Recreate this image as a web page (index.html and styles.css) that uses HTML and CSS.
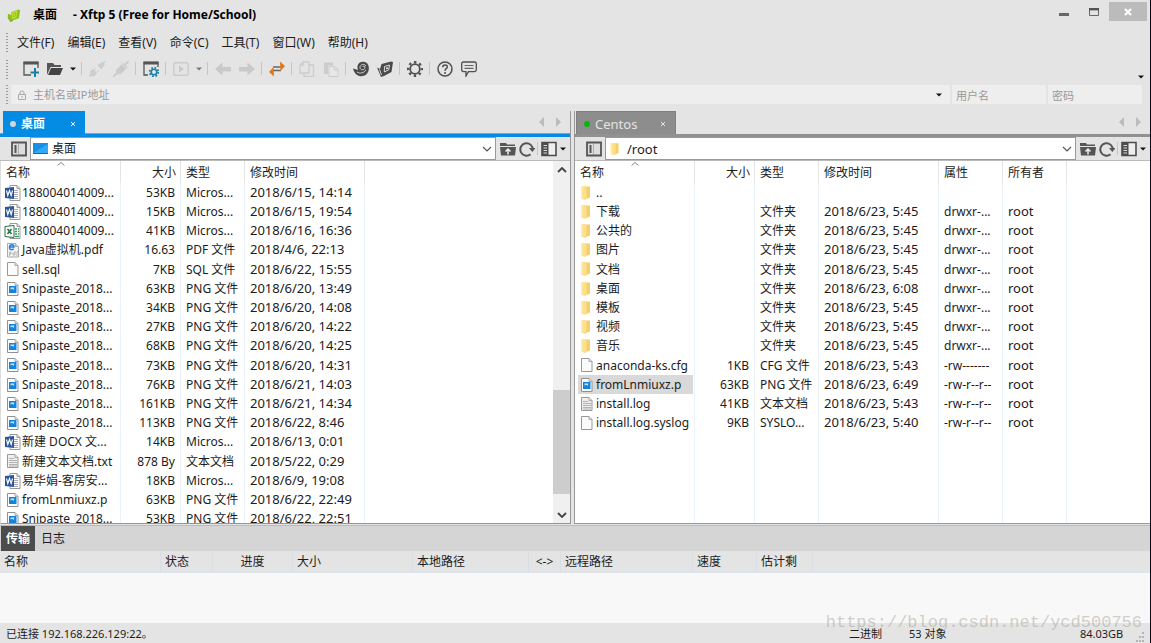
FILE: index.html
```html
<!DOCTYPE html>
<html lang="zh-CN">
<head>
<meta charset="utf-8">
<title>桌面 - Xftp 5</title>
<link rel="stylesheet" href="styles.css">
</head>
<body>
<svg class="defs" aria-hidden="true">
  <symbol id="word" viewBox="0 0 17 16"><path d="M6 .5h7l3 3v12H6z" fill="#fff" stroke="#999"/><path d="M13 .5v3h3" fill="#ddd" stroke="#999"/><path d="M9 5.500h5M9 7.500h5M9 9.500h5M9 11.500h5M9 13.500h5" stroke="#aab"/><path d="M1 3l9-1v12l-9-1z" fill="#2b579a"/><path d="M2.500 5.500l1.300 5 1.700-5 1.700 5 1.300-5" fill="none" stroke="#fff" stroke-width="1.100"/></symbol>
  <symbol id="excel" viewBox="0 0 17 16"><path d="M6 .5h7l3 3v12H6z" fill="#fff" stroke="#999"/><path d="M13 .5v3h3" fill="#ddd" stroke="#999"/><path d="M11 6h2M14 6h1M11 8.500h2M14 8.500h1M11 11h2M14 11h1M11 13.500h4" stroke="#3c9a62" stroke-width="1.500"/><path d="M1 3.500l9-1v12l-9-1z" fill="#fff" stroke="#217346"/><path d="M3.500 6l4 5M7.500 6l-4 5" stroke="#217346" stroke-width="1.600"/></symbol>
  <symbol id="pdf" viewBox="0 0 17 16"><path d="M3.500 1.500h8l3 3v10.500h-11z" fill="#f4f4f4" stroke="#aaa"/><path d="M11.500 1.500v3h3" fill="#ddd" stroke="#aaa"/><path d="M5.500 5h4.500c0-3-4-3-4.500 0s2 3 4.200 2" fill="none" stroke="#1d7fd4" stroke-width="1.400"/><path d="M5.500 14v-4h1.500v2h-1.500M11 9v4h-2v-2h2M13 14v-4.500h1" fill="none" stroke="#aaa" stroke-width=".8"/></symbol>
  <symbol id="file" viewBox="0 0 17 16"><path d="M3.500 1.500h7.500l3 3v10h-10.500z" fill="#fbfbfb" stroke="#989898"/><path d="M11 1.500v3h3" fill="#ddd" stroke="#aaa"/></symbol>
  <symbol id="text" viewBox="0 0 17 16"><path d="M3.500 1.500h7.500l3 3v10h-10.500z" fill="#eee" stroke="#989898"/><path d="M11 1.500v3h3" fill="#ddd" stroke="#aaa"/><path d="M5 5.500h5M5 7.500h8M5 9.500h8M5 11.500h8M5 13h8" stroke="#b4b4b4"/></symbol>
  <symbol id="png" viewBox="0 0 17 16"><path d="M3.500 1.500h7.500l3 3v10h-10.500z" fill="#fff" stroke="#909090"/><path d="M11 1.500v3h3" fill="#ddd" stroke="#aaa"/><path d="M5 5h7.500v7H5z" fill="#1483d8"/><path d="M6.500 6.500h4l-1 2.500-1.500-1.200-1.500.8z" fill="#bfe3ff"/></symbol>
  <symbol id="folder" viewBox="0 0 17 16"><path d="M7 1.500h5v11l-5 2z" fill="#f5cf6b"/><path d="M3 1h4.500l1 2v10.500l-1 1.500L3 14z" fill="#ffe08a"/><path d="M3 1h1.500v13L3 14z" fill="#fbedba"/></symbol>
  <symbol id="panel" viewBox="0 0 16 16"><path d="M1 1.500h14v13H1z" fill="#ddd" stroke="#555" stroke-width="1.800"/><path d="M4.500 4v8" stroke="#555" stroke-width="2"/><path d="M7.500 3v10" stroke="#999" stroke-width=".7"/></symbol>
  <symbol id="up" viewBox="0 0 16 16"><path d="M0 3.500V2h6l1 1.500h8V5H0zM0 6h16l-1 8.500H1z" fill="#555"/><path d="M8 13.500V8.500M5.500 10.500L8 8l2.500 2.500" fill="none" stroke="#eee" stroke-width="1.500"/></symbol>
  <symbol id="refresh" viewBox="0 0 16 16"><path d="M11.500 13.200A6.200 6.200 0 1 1 13.700 9" fill="none" stroke="#555" stroke-width="2"/><path d="M10 7h6.500l-3.200 4z" fill="#555"/></symbol>
  <symbol id="view" viewBox="0 0 16 16"><path d="M1 1.500h14v13H1z" fill="#eee" stroke="#4c4c4c" stroke-width="1.600"/><path d="M1 1.500h6.500v13H1z" fill="#4c4c4c"/><path d="M2.500 4.500h3.500M2.500 7h3.500M2.500 9.500h3.500M2.500 12h3.500" stroke="#ddd"/></symbol>
  <symbol id="drop" viewBox="0 0 6 4"><path d="M0 .5h6L3 3.500z" fill="#111"/></symbol>
  <symbol id="chev" viewBox="0 0 10 6"><path d="M1 1l4 4 4-4" fill="none" stroke="#555" stroke-width="1.200"/></symbol>
  <symbol id="caret" viewBox="0 0 8 4"><path d="M.5 3.500L4 .5l3.500 3" fill="none" stroke="#888"/></symbol>
  <symbol id="x" viewBox="0 0 8 8"><path d="M2 2l4 4M6 2l-4 4" stroke="currentColor"/></symbol>
  <symbol id="pager" viewBox="0 0 24 10"><path d="M6 0v10L1 5zM18 0v10l5-5z" fill="#bcbcbc"/></symbol>
</svg>

<header class="titlebar">
  <svg class="logo" viewBox="0 0 16 16"><path d="M1 6l4 1.500V4l8-3 2 1-1.500 9-6.500 2.500L4 15 1 10z" fill="#8cc21a"/><path d="M5 4.500l7-2.700-1 8.500-5 2z" fill="#b9df2c"/><path d="M7.500 6l2.500-1-.5 3.500-2 .8z" fill="#d3ec50" stroke="#86b31a" stroke-width=".8"/><path d="M1 10l3 5 3-1.500" fill="none" stroke="#6d9a20" stroke-width=".8"/></svg>
  <h1 class="title"><span>桌面</span><span>- Xftp 5 (Free for Home/School)</span></h1>
  <div class="winbtns">
    <button class="winbtn" aria-label="最小化"><svg width="10" height="10" viewBox="0 0 10 10"><path d="M0 7.500h10" stroke="#666" stroke-width="3"/></svg></button>
    <button class="winbtn" aria-label="最大化"><svg width="10" height="8" viewBox="0 0 10 8"><path d="M.5.500h9v7h-9z" fill="none" stroke="#666"/><path d="M0 1.200h10" stroke="#555" stroke-width="2.400"/></svg></button>
    <button class="winbtn close" aria-label="关闭"><svg width="8" height="8" viewBox="0 0 8 8"><path d="M1 1l6 6M7 1L1 7" stroke="#fff" stroke-width="2.200"/></svg></button>
  </div>
</header>

<nav class="menubar"><i class="grip"></i>
  <button>文件(F)</button><button>编辑(E)</button><button>查看(V)</button><button>命令(C)</button><button>工具(T)</button><button>窗口(W)</button><button>帮助(H)</button>
</nav>

<div class="toolbar"><i class="grip"></i>
  <div class="tools">
  <button class="tool" aria-label="新建"><svg viewBox="0 0 16 16"><path d="M8 14H1V1.500h14V7" fill="none" stroke="#555" stroke-width="1.300"/><path d="M.5 2h15" stroke="#555" stroke-width="3"/><path d="M12 7v9M7.500 11.500h9" stroke="#1c7ea8" stroke-width="2"/></svg></button>
  <button class="tool" aria-label="打开"><svg viewBox="0 0 16 16"><path d="M0 14V2h6l1.500 2H14v2H3.500z" fill="#555"/><path d="M4 7h12l-3 7H1z" fill="#444"/></svg></button>
  <button class="more" aria-label="更多"><svg width="6" height="4"><use href="#drop"/></svg></button>
  <i class="sep"></i>
  <button class="tool" aria-label="连接" disabled><svg viewBox="0 0 16 16"><path d="M0 15.500l3-3M13 3.500l3-3" stroke="#ccc" stroke-width="1.500"/><path d="M1.500 10.500l2.500-2 3.500 3.500-2 2.500-3 .5zM5.500 8.500l1.500-1.500M8 11l1.500-1.500M9 4.500l4-3 2.200 2.200-3 4z" fill="#ccc" stroke="#ccc"/></svg></button>
  <button class="tool" aria-label="断开" disabled><svg viewBox="0 0 16 16"><path d="M0 16l4-4M12 4l3.500-3.500" stroke="#ccc" stroke-width="1.800"/><path d="M3 9l6-6 4.500 4.500-6 5.500-4 .5z" fill="#ccc"/><path d="M7 6l4 4M9 1.500l5.500 5.500" stroke="#c4c4c4"/></svg></button>
  <i class="sep"></i>
  <button class="tool" aria-label="属性"><svg viewBox="0 0 16 16"><path d="M5 14H1V1.500h14V6" fill="none" stroke="#555" stroke-width="1.300"/><path d="M.5 2h15" stroke="#555" stroke-width="3"/><circle cx="11" cy="11" r="2.800" fill="none" stroke="#1c7ea8" stroke-width="1.600"/><circle cx="11" cy="11" r="4.300" fill="none" stroke="#1c7ea8" stroke-width="1.800" stroke-dasharray="1.700 1.680"/></svg></button>
  <i class="sep"></i>
  <button class="tool" aria-label="运行" disabled><svg viewBox="0 0 16 16"><rect x=".8" y="1.800" width="14.400" height="12.400" rx="1.500" fill="none" stroke="#ccc" stroke-width="1.500"/><path d="M6 4.500v7L11 8z" fill="#c8c8c8"/></svg></button>
  <button class="more dim" aria-label="更多" disabled><svg width="6" height="4"><use href="#drop"/></svg></button>
  <i class="sep"></i>
  <button class="tool" aria-label="后退" disabled><svg viewBox="0 0 16 16"><path d="M0 8l7.500-6.500V6H16v4.500H7.500v4z" fill="#c9c9c9"/></svg></button>
  <button class="tool" aria-label="前进" disabled><svg viewBox="0 0 16 16"><path d="M16 8L8.500 1.500V6H0v4.500h8.500v4z" fill="#c9c9c9"/></svg></button>
  <i class="sep"></i>
  <button class="tool" aria-label="传输"><svg viewBox="0 0 16 16"><path d="M4 6h8M4 9.500h8" stroke="#666" stroke-width="1.500"/><path d="M11 .5l5 4.500-4.500 5zM5 15.500L0 11l4.500-5z" fill="#e07818"/></svg></button>
  <i class="sep"></i>
  <button class="tool" aria-label="复制" disabled><svg viewBox="0 0 16 16"><path d="M5 12H1V4l3-3h6v11H5M1 4h3V1M10 4h4.500v11.500H5V12" fill="none" stroke="#ccc" stroke-width="1.300"/></svg></button>
  <button class="tool" aria-label="粘贴" disabled><svg viewBox="0 0 16 16"><path d="M1 1.500h9v3H5V13H1z" fill="#ccc"/><path d="M6 5.500h5.500l3.500 3v7H6zM11 5.500v3.500h4" fill="#e8e8e8" stroke="#ccc"/></svg></button>
  <i class="sep"></i>
  <button class="tool" aria-label="Xshell"><svg viewBox="0 0 16 16"><path d="M0 7.500l5 1.500C3 3 7 0 11 .8c4 .7 5 4 4.800 7.200-.3 5-4.300 7.500-8.300 7.200C4 15 1 12 0 7.500z" fill="#4a4a4a"/><path d="M13 5c-2-3-6-1.500-6 1.500 0 3 5 3 5 0 0-1.500-2-2-2.500-.5M4 11c3 2 7 1 9-2" fill="none" stroke="#ddd" stroke-width=".9"/></svg></button>
  <button class="tool" aria-label="Xftp"><svg viewBox="0 0 16 16"><path d="M0 6.500l3 1.500 1.500-5L14 .5l2 .5-1.500 10L7 15l-3 1z" fill="#4a4a4a"/><path d="M7.500 5.500L12.500 4l-.8 4.800L7.300 11zM2.500 8.500L4.500 14" fill="none" stroke="#ddd"/><circle cx="10" cy="7.300" r="1" fill="#eee"/></svg></button>
  <i class="sep"></i>
  <button class="tool" aria-label="选项"><svg viewBox="0 0 16 16"><circle cx="8" cy="8" r="4.800" fill="none" stroke="#505050" stroke-width="1.800"/><circle cx="8" cy="8" r="6.800" fill="none" stroke="#505050" stroke-width="2.400" stroke-dasharray="2.400 2.940" stroke-dashoffset="1.200"/></svg></button>
  <i class="sep"></i>
  <button class="tool" aria-label="帮助"><svg viewBox="0 0 16 16"><circle cx="8" cy="8" r="7" fill="none" stroke="#505050" stroke-width="1.500"/><path d="M5.700 6.300C5.700 3 10.500 3.300 10.300 6 10.200 7.600 8 7.700 8 9.800" fill="none" stroke="#505050" stroke-width="1.500"/><circle cx="8" cy="12" r="1" fill="#505050"/></svg></button>
  <button class="tool" aria-label="反馈"><svg viewBox="0 0 16 16"><path d="M2.500 1h11q1.800 0 1.800 1.800v6q0 1.800-1.800 1.800H7.500L5 15v-4.400H2.500Q.7 10.600.7 8.800v-6Q.7 1 2.500 1z" fill="none" stroke="#505050" stroke-width="1.300"/><path d="M3.500 4.500h9M3.500 7.300h9" stroke="#666" stroke-width="1.200"/></svg></button>
  </div>
  <button class="more overflow" aria-label="工具栏选项"><svg width="6" height="4"><use href="#drop"/></svg></button>
</div>

<form class="connect"><i class="grip"></i>
  <div class="host">
    <svg width="8" height="10" viewBox="0 0 8 10"><path d="M.5 4.500h7v5h-7zM2 4.500V2q2-2.500 4 0v2.500M4 6v2" fill="none" stroke="#aaa"/></svg>
    <input aria-label="主机名或IP地址" placeholder="主机名或IP地址">
    <button type="button" class="more" aria-label="历史记录"><svg width="6" height="4"><use href="#drop"/></svg></button>
  </div>
  <input class="cred" aria-label="用户名" placeholder="用户名">
  <input class="cred" aria-label="密码" type="password" placeholder="密码">
</form>

<main class="panes">
<section class="pane local">
  <div class="tabs">
    <button class="tab"><i class="dot"></i><span>桌面</span><svg width="8" height="8"><use href="#x"/></svg></button>
    <svg class="pager" width="24" height="10"><use href="#pager"/></svg>
  </div>
  <div class="pathbar">
    <button class="pbtn" aria-label="面板"><svg width="16" height="16"><use href="#panel"/></svg></button>
    <div class="combo">
      <svg class="place" width="15" height="13" viewBox="0 0 15 13"><path d="M0 1h15v10H0z" fill="#1690e6"/><path d="M0 11L15 2v9z" fill="#32a8f5"/><path d="M0 11.500h15" stroke="#0b6fb8"/></svg>
      <select aria-label="本地路径"><option>桌面</option></select>
      <svg class="arrow" width="10" height="6"><use href="#chev"/></svg>
    </div>
    <button class="pbtn" aria-label="上一级"><svg width="16" height="16"><use href="#up"/></svg></button>
    <button class="pbtn" aria-label="刷新"><svg width="16" height="16"><use href="#refresh"/></svg></button>
    <i class="sep"></i>
    <button class="pbtn wide" aria-label="视图"><svg width="16" height="16"><use href="#view"/></svg><svg width="6" height="4"><use href="#drop"/></svg></button>
  </div>
  <div class="listing">
    <div class="scroller">
    <table class="files">
      <colgroup><col class="c-name"><col class="c-size"><col class="c-type"><col class="c-date"><col></colgroup>
      <thead><tr><th>名称<svg class="sort" width="8" height="4"><use href="#caret"/></svg></th><th class="num">大小</th><th>类型</th><th>修改时间</th><th class="rest"></th></tr></thead>
      <tbody>
      <tr><td><span class="name"><svg><use href="#word"/></svg>188004014009...</span></td><td class="num">53KB</td><td>Micros...</td><td class="date">2018/6/15, 14:14</td><td class="rest"></td></tr>
      <tr><td><span class="name"><svg><use href="#word"/></svg>188004014009...</span></td><td class="num">15KB</td><td>Micros...</td><td class="date">2018/6/15, 19:54</td><td class="rest"></td></tr>
      <tr><td><span class="name"><svg><use href="#excel"/></svg>188004014009...</span></td><td class="num">41KB</td><td>Micros...</td><td class="date">2018/6/16, 16:36</td><td class="rest"></td></tr>
      <tr><td><span class="name"><svg><use href="#pdf"/></svg>Java虚拟机.pdf</span></td><td class="num">16.63</td><td>PDF 文件</td><td class="date">2018/4/6, 22:13</td><td class="rest"></td></tr>
      <tr><td><span class="name"><svg><use href="#file"/></svg>sell.sql</span></td><td class="num">7KB</td><td>SQL 文件</td><td class="date">2018/6/22, 15:55</td><td class="rest"></td></tr>
      <tr><td><span class="name"><svg><use href="#png"/></svg>Snipaste_2018...</span></td><td class="num">63KB</td><td>PNG 文件</td><td class="date">2018/6/20, 13:49</td><td class="rest"></td></tr>
      <tr><td><span class="name"><svg><use href="#png"/></svg>Snipaste_2018...</span></td><td class="num">34KB</td><td>PNG 文件</td><td class="date">2018/6/20, 14:08</td><td class="rest"></td></tr>
      <tr><td><span class="name"><svg><use href="#png"/></svg>Snipaste_2018...</span></td><td class="num">27KB</td><td>PNG 文件</td><td class="date">2018/6/20, 14:22</td><td class="rest"></td></tr>
      <tr><td><span class="name"><svg><use href="#png"/></svg>Snipaste_2018...</span></td><td class="num">68KB</td><td>PNG 文件</td><td class="date">2018/6/20, 14:25</td><td class="rest"></td></tr>
      <tr><td><span class="name"><svg><use href="#png"/></svg>Snipaste_2018...</span></td><td class="num">73KB</td><td>PNG 文件</td><td class="date">2018/6/20, 14:31</td><td class="rest"></td></tr>
      <tr><td><span class="name"><svg><use href="#png"/></svg>Snipaste_2018...</span></td><td class="num">76KB</td><td>PNG 文件</td><td class="date">2018/6/21, 14:03</td><td class="rest"></td></tr>
      <tr><td><span class="name"><svg><use href="#png"/></svg>Snipaste_2018...</span></td><td class="num">161KB</td><td>PNG 文件</td><td class="date">2018/6/21, 14:34</td><td class="rest"></td></tr>
      <tr><td><span class="name"><svg><use href="#png"/></svg>Snipaste_2018...</span></td><td class="num">113KB</td><td>PNG 文件</td><td class="date">2018/6/22, 8:46</td><td class="rest"></td></tr>
      <tr><td><span class="name"><svg><use href="#word"/></svg>新建 DOCX 文...</span></td><td class="num">14KB</td><td>Micros...</td><td class="date">2018/6/13, 0:01</td><td class="rest"></td></tr>
      <tr><td><span class="name"><svg><use href="#text"/></svg>新建文本文档.txt</span></td><td class="num">878 By</td><td>文本文档</td><td class="date">2018/5/22, 0:29</td><td class="rest"></td></tr>
      <tr><td><span class="name"><svg><use href="#word"/></svg>易华娟-客房安...</span></td><td class="num">18KB</td><td>Micros...</td><td class="date">2018/6/9, 19:08</td><td class="rest"></td></tr>
      <tr><td><span class="name"><svg><use href="#png"/></svg>fromLnmiuxz.p</span></td><td class="num">63KB</td><td>PNG 文件</td><td class="date">2018/6/22, 22:49</td><td class="rest"></td></tr>
      <tr><td><span class="name"><svg><use href="#png"/></svg>Snipaste_2018...</span></td><td class="num">53KB</td><td>PNG 文件</td><td class="date">2018/6/22, 22:51</td><td class="rest"></td></tr>
      </tbody>
    </table>
    </div>
    <div class="scrollbar">
      <button aria-label="向上滚动"><svg width="10" height="6" viewBox="0 0 10 6"><path d="M1 5l4-4 4 4" fill="none" stroke="#444" stroke-width="1.800"/></svg></button>
      <div class="track"><div class="thumb"></div></div>
      <button aria-label="向下滚动"><svg width="10" height="6" viewBox="0 0 10 6"><path d="M1 1l4 4 4-4" fill="none" stroke="#444" stroke-width="1.800"/></svg></button>
    </div>
  </div>
</section>

<section class="pane remote">
  <div class="tabs">
    <button class="tab"><i class="dot"></i><span>Centos</span><svg width="8" height="8"><use href="#x"/></svg></button>
    <svg class="pager" width="24" height="10"><use href="#pager"/></svg>
  </div>
  <div class="pathbar">
    <button class="pbtn" aria-label="面板"><svg width="16" height="16"><use href="#panel"/></svg></button>
    <div class="combo">
      <svg class="place" width="15" height="14"><use href="#folder"/></svg>
      <select aria-label="远程路径"><option>/root</option></select>
      <svg class="arrow" width="10" height="6"><use href="#chev"/></svg>
    </div>
    <button class="pbtn" aria-label="上一级"><svg width="16" height="16"><use href="#up"/></svg></button>
    <button class="pbtn" aria-label="刷新"><svg width="16" height="16"><use href="#refresh"/></svg></button>
    <i class="sep"></i>
    <button class="pbtn wide" aria-label="视图"><svg width="16" height="16"><use href="#view"/></svg><svg width="6" height="4"><use href="#drop"/></svg></button>
  </div>
  <div class="listing">
    <div class="scroller">
    <table class="files full">
      <colgroup><col class="c-name"><col class="c-size"><col class="c-type"><col class="c-date"><col class="c-type"><col class="c-type"><col></colgroup>
      <thead><tr><th>名称<svg class="sort" width="8" height="4"><use href="#caret"/></svg></th><th class="num">大小</th><th>类型</th><th>修改时间</th><th>属性</th><th>所有者</th><th class="rest"></th></tr></thead>
      <tbody>
      <tr><td><span class="name"><svg><use href="#folder"/></svg>..</span></td><td></td><td></td><td></td><td></td><td></td><td class="rest"></td></tr>
      <tr><td><span class="name"><svg><use href="#folder"/></svg>下载</span></td><td></td><td>文件夹</td><td class="date">2018/6/23, 5:45</td><td>drwxr-...</td><td class="date">root</td><td class="rest"></td></tr>
      <tr><td><span class="name"><svg><use href="#folder"/></svg>公共的</span></td><td></td><td>文件夹</td><td class="date">2018/6/23, 5:45</td><td>drwxr-...</td><td class="date">root</td><td class="rest"></td></tr>
      <tr><td><span class="name"><svg><use href="#folder"/></svg>图片</span></td><td></td><td>文件夹</td><td class="date">2018/6/23, 5:45</td><td>drwxr-...</td><td class="date">root</td><td class="rest"></td></tr>
      <tr><td><span class="name"><svg><use href="#folder"/></svg>文档</span></td><td></td><td>文件夹</td><td class="date">2018/6/23, 5:45</td><td>drwxr-...</td><td class="date">root</td><td class="rest"></td></tr>
      <tr><td><span class="name"><svg><use href="#folder"/></svg>桌面</span></td><td></td><td>文件夹</td><td class="date">2018/6/23, 6:08</td><td>drwxr-...</td><td class="date">root</td><td class="rest"></td></tr>
      <tr><td><span class="name"><svg><use href="#folder"/></svg>模板</span></td><td></td><td>文件夹</td><td class="date">2018/6/23, 5:45</td><td>drwxr-...</td><td class="date">root</td><td class="rest"></td></tr>
      <tr><td><span class="name"><svg><use href="#folder"/></svg>视频</span></td><td></td><td>文件夹</td><td class="date">2018/6/23, 5:45</td><td>drwxr-...</td><td class="date">root</td><td class="rest"></td></tr>
      <tr><td><span class="name"><svg><use href="#folder"/></svg>音乐</span></td><td></td><td>文件夹</td><td class="date">2018/6/23, 5:45</td><td>drwxr-...</td><td class="date">root</td><td class="rest"></td></tr>
      <tr><td><span class="name"><svg><use href="#file"/></svg>anaconda-ks.cfg</span></td><td class="num">1KB</td><td>CFG 文件</td><td class="date">2018/6/23, 5:43</td><td>-rw-------</td><td class="date">root</td><td class="rest"></td></tr>
      <tr><td><span class="name selected"><svg><use href="#png"/></svg>fromLnmiuxz.p</span></td><td class="num">63KB</td><td>PNG 文件</td><td class="date">2018/6/23, 6:49</td><td>-rw-r--r--</td><td class="date">root</td><td class="rest"></td></tr>
      <tr><td><span class="name"><svg><use href="#text"/></svg>install.log</span></td><td class="num">41KB</td><td>文本文档</td><td class="date">2018/6/23, 5:43</td><td>-rw-r--r--</td><td class="date">root</td><td class="rest"></td></tr>
      <tr><td><span class="name"><svg><use href="#file"/></svg>install.log.syslog</span></td><td class="num">9KB</td><td>SYSLO...</td><td class="date">2018/6/23, 5:40</td><td>-rw-r--r--</td><td class="date">root</td><td class="rest"></td></tr>
      <tr class="fill"><td></td><td></td><td></td><td></td><td></td><td></td><td class="rest"></td></tr>
      </tbody>
    </table>
    </div>
  </div>
</section>
</main>

<section class="queue">
  <div class="qtabs"><button class="active">传输</button><button>日志</button></div>
  <table class="transfers">
    <colgroup><col class="q160"><col class="q52"><col class="q80"><col class="q120"><col class="q116"><col class="q32"><col class="q132"><col class="q64"><col class="q56"><col></colgroup>
    <thead><tr><th>名称</th><th>状态</th><th class="mid">进度</th><th>大小</th><th>本地路径</th><th class="mid">&lt;-&gt;</th><th>远程路径</th><th>速度</th><th>估计剩</th><th class="rest"></th></tr></thead>
  </table>
</section>

<footer class="status">
  <span class="conn">已连接 192.168.226.129:22。</span>
  <span class="mode">二进制</span><span class="count">53 对象</span><span class="free">84.03GB</span>
  <svg width="10" height="10" viewBox="0 0 10 10"><path d="M7 0h2v2H7zM7 4h2v2H7zM4 4h2v2H4zM7 8h2v2H7zM4 8h2v2H4zM1 8h2v2H1z" fill="#b4b4b4"/></svg>
</footer>
<div class="watermark">https://blog.csdn.net/ycd500756</div>
</body>
</html>
```
FILE: styles.css
```css
* { box-sizing: border-box; }
body {
  margin: 0;
  height: 100vh;
  display: flex;
  flex-direction: column;
  overflow: hidden;
  position: relative;
  background: #e4e4e4;
  border-right: 1px solid #0a0a14;
  color: #1c1c1c;
  font: 12px/16px "Noto Sans", "Noto Sans CJK SC", sans-serif;
}
button, input, select { font: inherit; color: inherit; margin: 0; padding: 0; border: 0; background: none; border-radius: 0; outline: 0; }
svg { display: block; flex: none; }
.defs { position: absolute; width: 0; height: 0; }

.titlebar { display: flex; height: 30px; align-items: center; padding-left: 7px; flex: none; }
.logo { width: 14px; height: 15px; }
.title { display: flex; gap: 16px; margin: 0; padding-left: 12px; font-size: 12px; color: #000; flex: 1; }
.winbtns { display: flex; align-self: flex-start; padding: 2px 3px 0 0; }
.winbtn { width: 30px; height: 19px; display: grid; place-items: center; }
.winbtn.close { width: 38px; background: #bbb; }

.grip { width: 2px; height: 19px; background: repeating-linear-gradient(#999 0 1px, transparent 1px 3px); flex: none; }
.menubar { display: flex; align-items: center; gap: 13px; height: 25px; padding-left: 6px; flex: none; }
.menubar .grip { margin-right: -4px; }
.toolbar { display: flex; align-items: center; height: 29px; padding: 0 3px 0 6px; flex: none; }
.tools { display: flex; align-items: center; flex: 1; padding: 0 0 2px 11px; }
.tool { width: 24px; height: 24px; display: grid; place-items: center; }
.tool svg { width: 16px; height: 16px; }
.more { width: 12px; height: 14px; display: grid; place-items: center; }
.more.dim { opacity: .5; }
.more.overflow { align-self: flex-end; }
.sep { width: 1px; height: 13px; margin: 0 3px 0 2px; background: #c6c6c6; flex: none; }

.connect { display: flex; align-items: center; gap: 2px; height: 23px; margin: 0; padding: 0 8px 2px 6px; flex: none; }
.host { flex: 1; display: flex; align-items: center; height: 19px; margin-left: 1px; padding: 0 5px 0 7px; background: #eee; }
.host input { flex: 1; min-width: 0; padding-left: 7px; font-size: 11px; }
.cred { width: 94px; height: 19px; background: #eee; padding: 2px 4px 0; font-size: 11px; }
::placeholder { color: #999; opacity: 1; }

.panes { flex: 1; min-height: 0; display: flex; gap: 3px; padding-top: 4px; }
.pane { display: flex; flex-direction: column; min-width: 0; }
.local { flex: 571; border-right: 1px solid #999; }
.remote { flex: 576; border-left: 1px solid #999; }
.tabs { display: flex; align-items: flex-end; height: 26px; flex: none; border-bottom: 3px solid #048be4; padding: 0 8px 0 3px; }
.local .tabs { box-shadow: inset 0 -1px #999; }
.remote .tabs { border-color: #919191; padding-left: 2px; margin-left: -1px; }
.tab { display: flex; align-items: center; height: 23px; padding: 2px 8px 0 7px; color: #fff; background: #048be4; width: 82px; font-weight: bold; }
.tab span { flex: 1; text-align: left; }
.tab .dot { width: 6px; height: 6px; border-radius: 50%; background: #d5d5d5; margin-right: 5px; }
.remote .tab { width: 100px; background: #8d8d8d; color: #e4e4e4; font-weight: normal; font-size: 13px; border: 1px solid #808080; border-bottom: 0; }
.remote .dot { background: #0ab50a; }
.pager { margin: 0 0 7px auto; }

.pathbar { display: flex; align-items: center; height: 24px; padding: 0 3px 0 9px; border-bottom: 1px solid #bbb; flex: none; }
.pathbar .sep { margin: 0 2px 0 1px; }
.pbtn { width: 19px; height: 22px; display: flex; align-items: center; justify-content: center; gap: 3px; }
.pbtn.wide { width: 27px; }
.combo { flex: 1; display: grid; align-items: center; height: 23px; border: 1px solid #999; background: #fff; margin: 0 2px 0 2px; }
.combo > * { grid-area: 1 / 1; }
.combo select { appearance: none; width: 100%; height: 21px; padding-left: 21px; font-size: 12px; }
.remote .combo select { font-size: 13px; }
.place { margin-left: 2px; z-index: 1; }
.arrow { justify-self: end; margin-right: 3px; }

.listing { flex: 1; min-height: 0; display: flex; background: #fff; }
.local .listing { border-left: 1px solid #ddd; border-bottom: 1px solid #4fa9e0; }
.remote .listing { border-bottom: 1px solid #999; }
.scroller { flex: 1; min-width: 0; overflow: hidden; }
.files, .transfers { border-collapse: separate; border-spacing: 0; table-layout: fixed; width: 100%; }
.files.full { height: 100%; }
.c-name { width: 120px; }
.c-size { width: 60px; }
.c-type { width: 64px; }
.c-date { width: 120px; }
th, td { padding: 0; font-weight: normal; text-align: left; white-space: nowrap; }
.files th, .files td { padding: 0 0 0 5px; border-right: 1px solid #eaf2fb; overflow: hidden; }
.files th { height: 22px; padding-top: 1px; border-color: #e4e4e4; position: relative; }
.files td { height: 19px; line-height: 19px; }
.files tr:nth-child(5n) td { height: 20px; }
.files td:first-child { padding: 0 1px 0 3px; }
.files .num { text-align: right; padding-right: 5px; }
.files th.num { padding-right: 4px; }
.files .date { font-size: 13px; }
.files .fill td { height: auto; }
.files .rest, .transfers .rest { border-right: 0; }
.sort { position: absolute; top: 1px; left: 56px; }
.name { display: flex; align-items: center; gap: 1px; height: 19px; }
.name svg { width: 17px; height: 16px; }
.name.selected { background: #d9d9d9; }

.scrollbar { width: 17px; background: #f0f0f0; display: flex; flex-direction: column; flex: none; }
.scrollbar button { height: 17px; display: grid; place-items: center; }
.track { flex: 1; display: flex; flex-direction: column; justify-content: flex-end; padding-bottom: 12px; }
.thumb { height: 33%; background: #cdcdcd; }

.queue { height: 98px; flex: none; background: #f8f8f8; margin-top: 1px; border-top: 1px solid #bbb; }
.qtabs { display: flex; height: 25px; background: #d5d5d5; padding-left: 1px; }
.qtabs button { padding: 0 6px; }
.qtabs .active { padding: 0 5px; background: #4c4c4c; color: #fff; font-weight: bold; }
.transfers { background: #e4e4e4; }
.transfers th { height: 22px; padding-left: 4px; border-right: 1px solid #d8dee6; border-bottom: 1px solid #dde4ec; }
.transfers .mid { text-align: center; padding: 0; }
.q160 { width: 161px; } .q52 { width: 52px; } .q80 { width: 80px; } .q120 { width: 120px; }
.q116 { width: 116px; } .q32 { width: 32px; } .q132 { width: 132px; } .q64 { width: 64px; } .q56 { width: 56px; }

.status { display: flex; align-items: center; height: 20px; flex: none; padding: 2px 5px 0 6px; font-size: 11px; line-height: 16px; }
.conn { flex: 1; }
.mode { width: 60px; }
.count { width: 171px; }
.free { width: 55px; }
.status svg { margin: 6px 0 0 auto; }

.watermark { position: absolute; right: 8px; bottom: 9px; font: 17px/22px "Liberation Mono", monospace; color: rgba(165, 165, 150, .5); pointer-events: none; }
```
